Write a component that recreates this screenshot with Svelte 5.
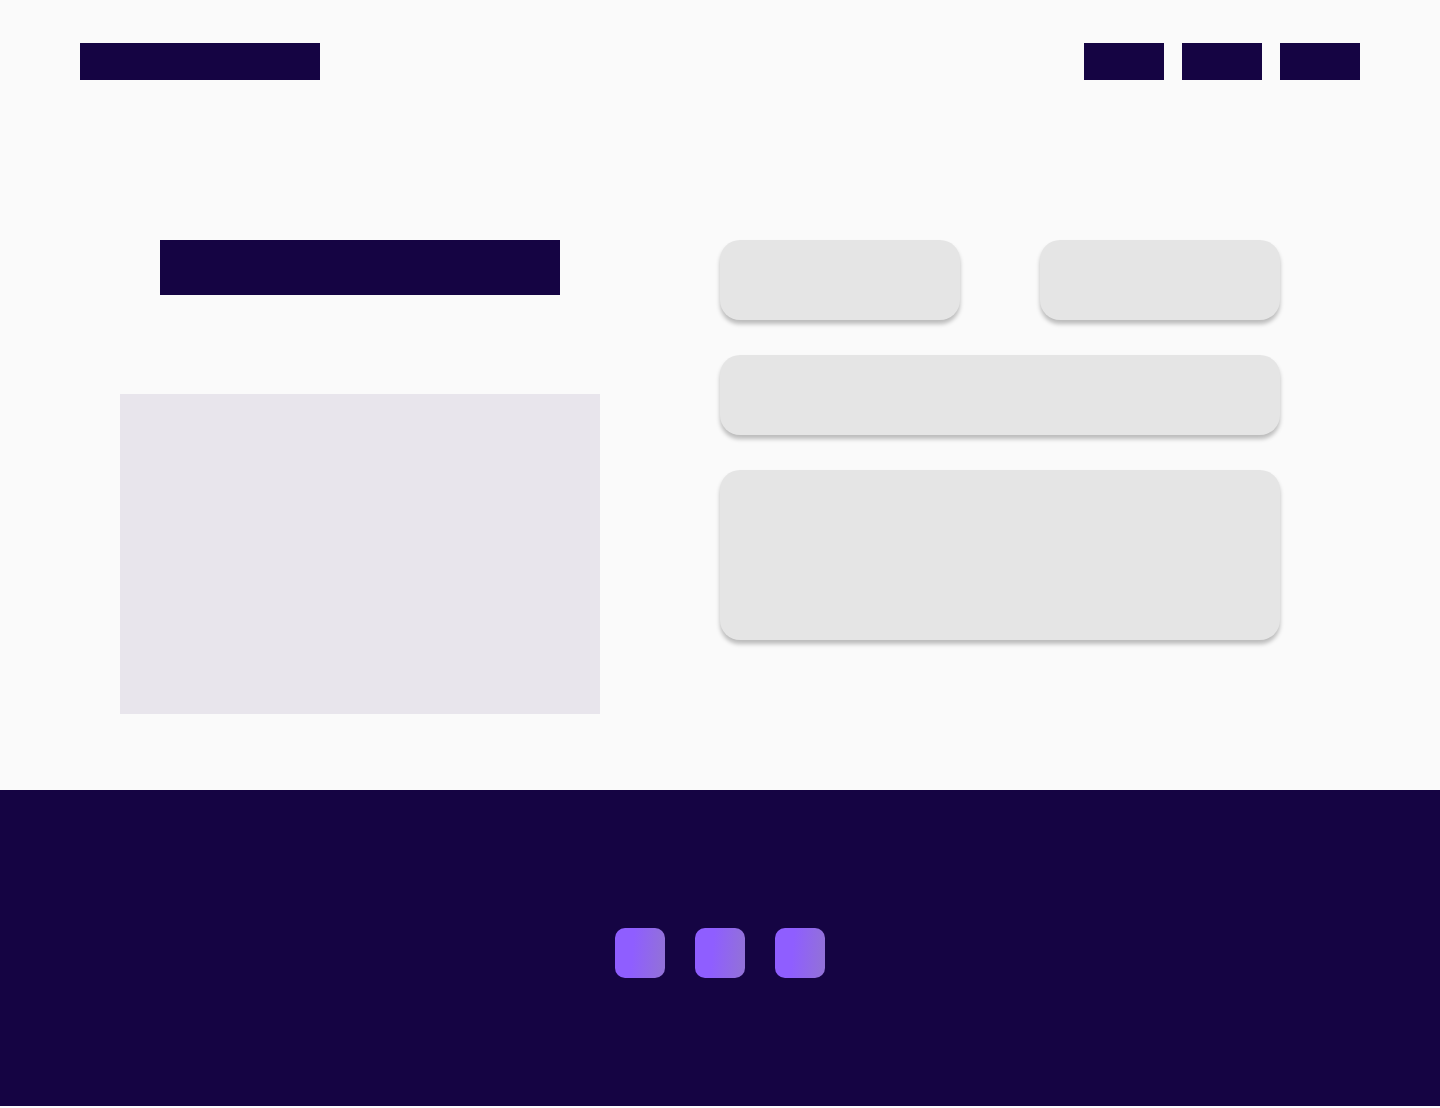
<script>
  const navLinks = ['Home', 'About', 'Contact'];
  const socialLinks = ['First profile', 'Second profile', 'Third profile'];
</script>

<div class="page">
  <header>
    <a class="brand" href="#top" aria-label="Home page"></a>
    <nav aria-label="Main">
      {#each navLinks as label}
        <a href="#{label.toLowerCase()}" aria-label={label}></a>
      {/each}
    </nav>
  </header>

  <main>
    <section class="intro">
      <div class="title"></div>
      <div class="media"></div>
    </section>

    <form>
      <div class="names">
        <input type="text" aria-label="First name" />
        <input type="text" aria-label="Last name" />
      </div>
      <input type="email" aria-label="Email" />
      <textarea aria-label="Message"></textarea>
    </form>
  </main>

  <footer>
    {#each socialLinks as label}
      <a href="#social" aria-label={label}></a>
    {/each}
  </footer>
</div>

<style>
  :global(body) {
    margin: 0;
    background: #fafafa;
    font-family: Inter, sans-serif;
  }

  .page {
    --ink: #150443;
  }

  header {
    display: flex;
    justify-content: space-between;
    padding: 43px 80px 0;
  }

  .brand {
    width: 240px;
    height: 37px;
    background: var(--ink);
  }

  nav {
    display: flex;
    gap: 18px;
  }

  nav a {
    width: 80px;
    height: 37px;
    background: var(--ink);
  }

  main {
    display: grid;
    grid-template-columns: 6fr 7fr;
    gap: 120px;
    padding: 160px 160px 76px 120px;
  }

  .intro {
    display: flex;
    flex-direction: column;
    gap: 99px;
  }

  .title {
    height: 55px;
    margin: 0 40px;
    background: var(--ink);
  }

  .media {
    height: 320px;
    background: #e8e5ec;
  }

  form {
    display: flex;
    flex-direction: column;
    gap: 35px;
  }

  .names {
    display: grid;
    grid-template-columns: 1fr 1fr;
    gap: 80px;
  }

  input,
  textarea {
    display: block;
    box-sizing: border-box;
    width: 100%;
    height: 80px;
    padding: 20px;
    border: 0;
    border-radius: 20px;
    background: #e5e5e5;
    box-shadow: 0 4px 4px rgba(0, 0, 0, 0.25);
    font: inherit;
    resize: none;
  }

  textarea {
    height: 170px;
  }

  footer {
    display: flex;
    justify-content: center;
    gap: 30px;
    padding: 138px 80px 128px;
    background: var(--ink);
  }

  footer a {
    width: 50px;
    height: 50px;
    border-radius: 10px;
    background: linear-gradient(95deg, #8f5eff 36%, #9271d8 96%);
  }
</style>
